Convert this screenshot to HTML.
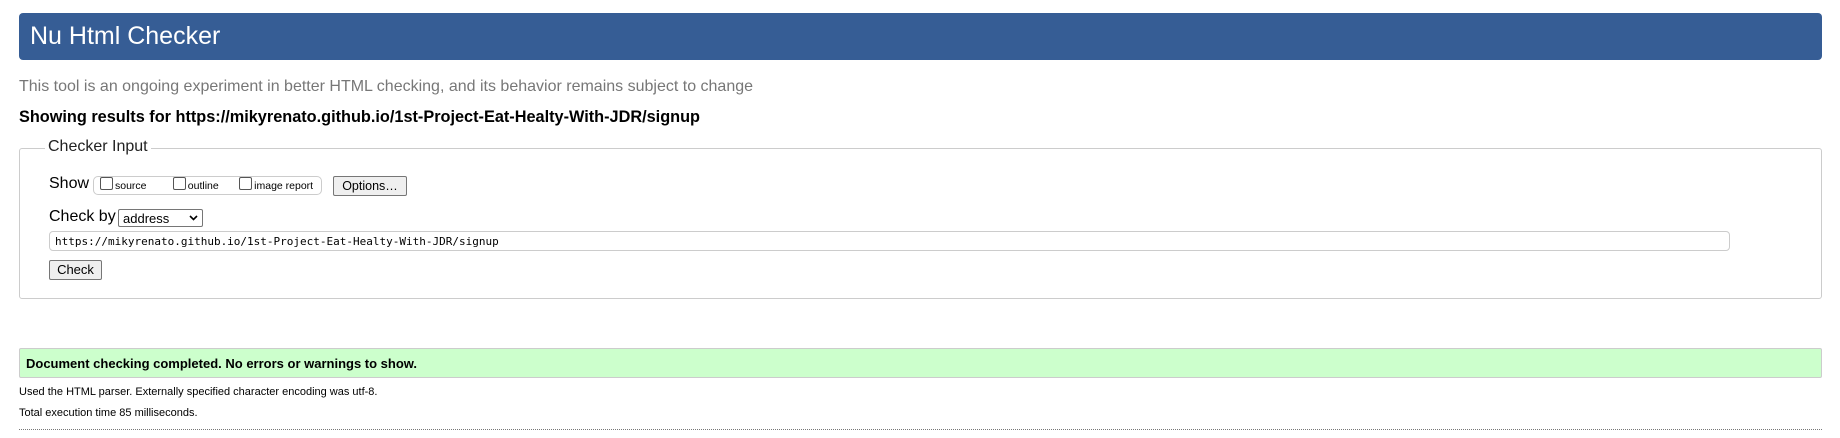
<!DOCTYPE html>
<html><head><meta charset="utf-8"><style>
body{margin:0;width:1840px;height:438px;background:#fff;font-family:"Liberation Sans",Arial,sans-serif;position:relative;overflow:hidden}
.a{position:absolute;white-space:nowrap}
#hdr{left:19px;top:13px;width:1803px;height:47px;background:#365d95;border-radius:4px;color:#fff;font-size:25px;line-height:47px;text-indent:11px}
#fs{left:19px;top:148px;width:1801px;height:149px;border:1px solid #ccc;border-radius:3px}
.btn{position:absolute;background:#efefef;border:1px solid #767676;border-radius:2px;font-size:13px;text-align:center;box-sizing:border-box}
.cb{display:inline-block;width:11px;height:11px;border:1px solid #555;border-radius:2px;vertical-align:-1px;margin-right:2px;background:#fff}
</style></head><body>
<div class="a" id="hdr">Nu Html Checker</div>
<div class="a" style="left:19px;top:78px;font-size:16px;color:#777">This tool is an ongoing experiment in better HTML checking, and its behavior remains subject to change</div>
<div class="a" style="left:19px;top:108px;font-size:16.3px;font-weight:bold;color:#000">Showing results for https://mikyrenato.github.io/1st-Project-Eat-Healty-With-JDR/signup</div>
<div class="a" id="fs"></div>
<div class="a" style="left:45px;top:138px;background:#fff;padding:0 3px;font-size:16px;color:#222">Checker Input</div>
<div class="a" style="left:49px;top:175px;font-size:16px">Show</div>
<div class="a" style="left:93px;top:176px;border:1px solid #ccc;border-radius:5px;font-size:10.5px;line-height:18px;padding-left:6px;box-sizing:border-box;width:229px;height:19px"><span class="cb"></span>source &nbsp; &nbsp; &nbsp; &nbsp; <span class="cb"></span>outline &nbsp; &nbsp; &nbsp; <span class="cb"></span>image report</div>
<div class="btn" style="left:333px;top:176px;width:74px;height:20px;line-height:18px;font-size:12.5px">Options…</div>
<div class="a" style="left:49px;top:208px;font-size:16px">Check by</div>
<div class="a" style="left:118px;top:209px;width:85px;height:18px;border:1px solid #767676;border-radius:2px;font-size:13px;line-height:17px;padding-left:4px;box-sizing:border-box">address</div>
<svg class="a" style="left:189px;top:215px" width="9" height="6"><path d="M1 1L4.5 4.5L8 1" stroke="#000" stroke-width="1.6" fill="none"/></svg>
<div class="a" style="left:49px;top:231px;width:1681px;height:20px;border:1px solid #ccc;border-radius:4px;font-family:'DejaVu Sans Mono','Liberation Mono',monospace;font-size:11px;line-height:19px;padding-left:5px;box-sizing:border-box">https://mikyrenato.github.io/1st-Project-Eat-Healty-With-JDR/signup</div>
<div class="btn" style="left:49px;top:260px;width:53px;height:20px;line-height:18px">Check</div>
<div class="a" style="left:19px;top:348px;width:1801px;height:28px;background:#ccffcc;border:1px solid #ccc;border-radius:2px"></div>
<div class="a" style="left:26px;top:356px;font-size:13px;font-weight:bold">Document checking completed. No errors or warnings to show.</div>
<div class="a" style="left:19px;top:386px;font-size:11px">Used the HTML parser. Externally specified character encoding was utf-8.</div>
<div class="a" style="left:19px;top:407px;font-size:11px">Total execution time 85 milliseconds.</div>
<div class="a" style="left:19px;top:429px;width:1803px;border-top:1px dotted #777"></div>
</body></html>
